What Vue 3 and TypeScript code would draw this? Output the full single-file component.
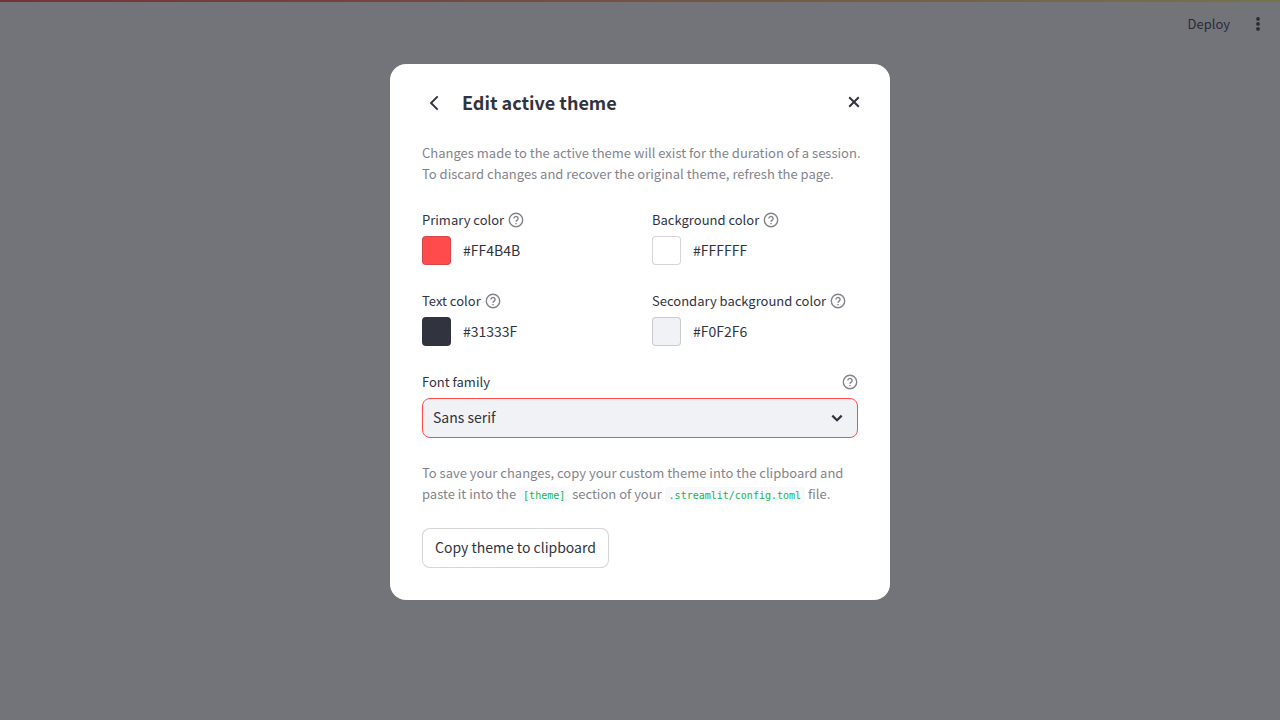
<script setup lang="ts">
import { ref } from 'vue'

interface ThemeColor {
  id: string
  label: string
  value: string
}

const colors = ref<ThemeColor[]>([
  { id: 'primary', label: 'Primary color', value: '#FF4B4B' },
  { id: 'background', label: 'Background color', value: '#FFFFFF' },
  { id: 'text', label: 'Text color', value: '#31333F' },
  { id: 'secondary', label: 'Secondary background color', value: '#F0F2F6' },
])

const font = ref('Sans serif')
const fonts = ['Sans serif', 'Serif', 'Monospace']

function setColor(color: ThemeColor, event: Event) {
  color.value = (event.target as HTMLInputElement).value.toUpperCase()
}

function copyTheme() {
  const [primary, background, text, secondary] = colors.value.map((c) => c.value)
  const lines = [
    '[theme]',
    `primaryColor="${primary}"`,
    `backgroundColor="${background}"`,
    `secondaryBackgroundColor="${secondary}"`,
    `textColor="${text}"`,
    `font="${font.value.toLowerCase()}"`,
  ]
  navigator.clipboard?.writeText(lines.join('\n'))
}
</script>

<template>
  <div class="app">
    <div class="decoration"></div>
    <header class="toolbar">
      <button type="button" class="plain deploy">Deploy</button>
      <button type="button" class="plain menu" aria-label="Main menu">
        <svg width="20" height="20" viewBox="0 0 20 20" fill="currentColor">
          <circle cx="10" cy="4.9" r="1.9" />
          <circle cx="10" cy="9.9" r="1.9" />
          <circle cx="10" cy="14.9" r="1.9" />
        </svg>
      </button>
    </header>

    <div class="backdrop">
      <section class="dialog" role="dialog" aria-modal="true" aria-labelledby="dialog-title">
        <header class="head">
          <button type="button" class="plain back" aria-label="Back">
            <svg width="24" height="24" viewBox="0 0 24 24" fill="none" stroke="currentColor" stroke-width="1.9">
              <path d="M15.7 5.3 9 12l6.7 6.7" />
            </svg>
          </button>
          <h1 id="dialog-title">Edit active theme</h1>
          <button type="button" class="plain close" aria-label="Close">
            <svg width="20" height="20" viewBox="0 0 20 20" fill="none" stroke="currentColor" stroke-width="2">
              <path d="M5.2 4.2l9.6 9.6M14.8 4.2l-9.6 9.6" />
            </svg>
          </button>
        </header>

        <p class="note">
          Changes made to the active theme will exist for the duration of a session.<br />
          To discard changes and recover the original theme, refresh the page.
        </p>

        <div class="colors">
          <div v-for="color in colors" :key="color.id" class="field">
            <div class="label-row">
              <label :for="color.id">{{ color.label }}</label>
              <button type="button" class="plain help" :aria-label="`Help for ${color.label}`">
                <svg width="16" height="16" viewBox="0 0 16 16" fill="none" stroke="currentColor" stroke-width="1.4">
                  <circle cx="8" cy="8" r="6.7" />
                  <path d="M5.9 6.5a2.1 2 0 1 1 3.3 1.6C8.4 8.7 8 9 8 9.8" />
                  <path d="M8 10.9v1.4" />
                </svg>
              </button>
            </div>
            <div class="picker">
              <input :id="color.id" type="color" :value="color.value.toLowerCase()" @input="setColor(color, $event)" />
              <span>{{ color.value }}</span>
            </div>
          </div>
        </div>

        <div class="field">
          <div class="label-row spread">
            <label for="font">Font family</label>
            <button type="button" class="plain help" aria-label="Help for Font family">
              <svg width="16" height="16" viewBox="0 0 16 16" fill="none" stroke="currentColor" stroke-width="1.4">
                <circle cx="8" cy="8" r="6.7" />
                <path d="M5.9 6.5a2.1 2 0 1 1 3.3 1.6C8.4 8.7 8 9 8 9.8" />
                <path d="M8 10.9v1.4" />
              </svg>
            </button>
          </div>
          <div class="select">
            <select id="font" v-model="font">
              <option v-for="name in fonts" :key="name">{{ name }}</option>
            </select>
            <svg width="20" height="20" viewBox="0 0 20 20" fill="none" stroke="currentColor" stroke-width="2.2">
              <path d="M5.3 7.6l4.7 4.6 4.7-4.6" />
            </svg>
          </div>
        </div>

        <p class="note save">
          To save your changes, copy your custom theme into the clipboard and<br />
          paste it into the <code>[theme]</code> section of your <code>.streamlit/config.toml</code> file.
        </p>

        <button type="button" class="copy" @click="copyTheme">Copy theme to clipboard</button>
      </section>
    </div>
  </div>
</template>

<style>
body {
  margin: 0;
}
</style>

<style scoped>
.app {
  min-height: 100vh;
  background: #fff;
  color: #31333f;
  font-family: 'Noto Sans CJK SC', 'Noto Sans', sans-serif;
  font-size: 14px;
}

.app * {
  box-sizing: border-box;
}

.decoration {
  height: 2px;
  background: linear-gradient(90deg, #ff4b4b, #fffd80);
}

.toolbar {
  display: flex;
  justify-content: flex-end;
  align-items: center;
  gap: 18px;
  height: 44px;
  padding-right: 12px;
}

.plain {
  display: flex;
  align-items: center;
  justify-content: center;
  padding: 0;
  border: 0;
  background: none;
  color: inherit;
  font: inherit;
  cursor: pointer;
}

.deploy {
  font-size: 13px;
  line-height: 20px;
}

.backdrop {
  position: fixed;
  inset: 0;
  display: flex;
  align-items: flex-start;
  justify-content: center;
  padding: 64px 16px;
  overflow: auto;
  background: rgba(38, 39, 46, 0.645);
}

.dialog {
  width: 100%;
  max-width: 500px;
  padding: 24px 32px 32px;
  border-radius: 16px;
  background: #fff;
}

.head {
  display: flex;
  align-items: center;
  gap: 16px;
  height: 30px;
  margin-bottom: 24px;
}

h1 {
  flex: 1;
  align-self: flex-start;
  margin: 0;
  font-size: 18px;
  font-weight: 600;
  line-height: 28px;
}

.close {
  margin-right: -6px;
}

.note {
  margin: 0;
  color: #83848b;
  font-size: 13px;
  line-height: 21px;
  white-space: nowrap;
}

.colors {
  display: grid;
  grid-template-columns: 1fr 1fr;
  gap: 26px 24px;
  margin: 26px 0;
}

.label-row {
  display: flex;
  align-items: center;
  gap: 4px;
  height: 20px;
  margin-bottom: 6px;
  font-size: 13px;
  line-height: 20px;
  white-space: nowrap;
}

.spread {
  justify-content: space-between;
}

.help {
  color: #83848b;
}

.picker {
  display: flex;
  align-items: flex-start;
  gap: 12px;
  line-height: 28px;
}

input[type='color'] {
  appearance: none;
  width: 29px;
  height: 29px;
  padding: 0;
  border: 0;
  background: none;
  cursor: pointer;
}

input[type='color']::-webkit-color-swatch-wrapper {
  padding: 0;
}

input[type='color']::-webkit-color-swatch {
  border: 1px solid rgba(49, 51, 63, 0.2);
  border-radius: 4px;
}

.select {
  position: relative;
}

select {
  display: block;
  width: 100%;
  height: 40px;
  padding: 0 40px 2px 10px;
  border: 1px solid #ff4b4b;
  border-radius: 8px;
  outline: none;
  background: #f0f2f6;
  color: inherit;
  font: inherit;
  appearance: none;
}

.select svg {
  position: absolute;
  top: 10px;
  right: 11px;
  pointer-events: none;
}

.save {
  margin: 24px 0;
}

code {
  padding: 3px 4px;
  border-radius: 4px;
  background: #f8f9fb;
  color: #21b354;
  font-family: 'DejaVu Sans Mono', monospace;
  font-size: 10px;
  line-height: 10px;
}

.copy {
  height: 40px;
  padding: 0 12px 2px;
  border: 1px solid rgba(49, 51, 63, 0.2);
  border-radius: 8px;
  background: #fff;
  color: inherit;
  font: inherit;
  cursor: pointer;
}
</style>
